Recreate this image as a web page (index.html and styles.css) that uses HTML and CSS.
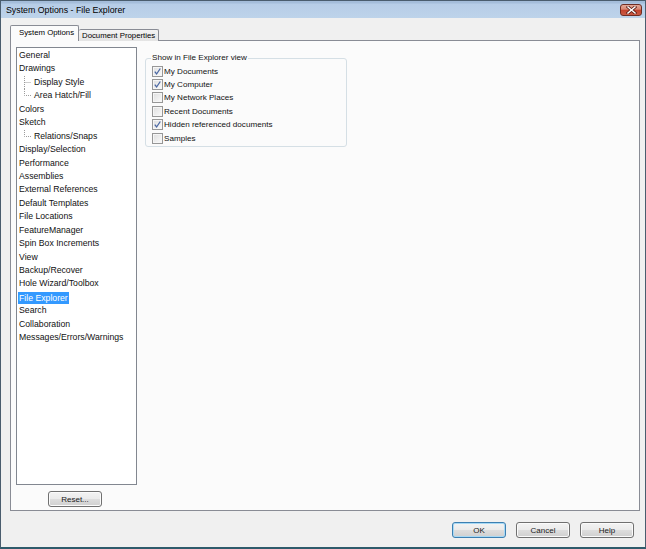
FILE: index.html
```html
<!DOCTYPE html>
<html lang="en">
<head>
<meta charset="utf-8">
<title>System Options - File Explorer</title>
<link rel="stylesheet" href="styles.css">
</head>
<body>
<div class="window">
  <div class="titlebar">
    <span class="title">System Options - File Explorer</span>
    <div class="close">
      <svg width="11" height="8" viewBox="0 0 11 8"><path class="x-shadow" d="M2 1 L9 7 M9 1 L2 7"/><path class="x-fg" d="M2 1 L9 7 M9 1 L2 7"/></svg>
    </div>
  </div>
  <div class="client">
    <div class="tabs">
      <div class="tab active">System Options</div>
      <div class="tab">Document Properties</div>
    </div>
    <div class="panel">
      <div class="leftcol">
        <ul class="tree">
          <li><span>General</span></li>
          <li><span>Drawings</span></li>
          <li class="child"><svg class="conn" width="15" height="13.45" viewBox="0 0 15 13.45"><path d="M5.5 0V13.45M5.5 6.5H12"/></svg><span>Display Style</span></li>
          <li class="child"><svg class="conn" width="15" height="13.45" viewBox="0 0 15 13.45"><path d="M5.5 0V6.5H12"/></svg><span>Area Hatch/Fill</span></li>
          <li><span>Colors</span></li>
          <li><span>Sketch</span></li>
          <li class="child"><svg class="conn" width="15" height="13.45" viewBox="0 0 15 13.45"><path d="M5.5 0V6.5H12"/></svg><span>Relations/Snaps</span></li>
          <li><span>Display/Selection</span></li>
          <li><span>Performance</span></li>
          <li><span>Assemblies</span></li>
          <li><span>External References</span></li>
          <li><span>Default Templates</span></li>
          <li><span>File Locations</span></li>
          <li><span>FeatureManager</span></li>
          <li><span>Spin Box Increments</span></li>
          <li><span>View</span></li>
          <li><span>Backup/Recover</span></li>
          <li><span>Hole Wizard/Toolbox</span></li>
          <li><span class="sel">File Explorer</span></li>
          <li><span>Search</span></li>
          <li><span>Collaboration</span></li>
          <li><span>Messages/Errors/Warnings</span></li>
        </ul>
        <button class="btn reset">Reset...</button>
      </div>
      <div class="group">
        <div class="group-title">Show in File Explorer view</div>
        <div class="row"><span class="cb checked"><svg width="9" height="9" viewBox="0 0 9 9"><path d="M1.8 4.6 L3.6 7 L7.3 1.5"/></svg></span><span>My Documents</span></div>
        <div class="row"><span class="cb checked"><svg width="9" height="9" viewBox="0 0 9 9"><path d="M1.8 4.6 L3.6 7 L7.3 1.5"/></svg></span><span>My Computer</span></div>
        <div class="row"><span class="cb"></span><span>My Network Places</span></div>
        <div class="row"><span class="cb"></span><span>Recent Documents</span></div>
        <div class="row"><span class="cb checked"><svg width="9" height="9" viewBox="0 0 9 9"><path d="M1.8 4.6 L3.6 7 L7.3 1.5"/></svg></span><span>Hidden referenced documents</span></div>
        <div class="row"><span class="cb"></span><span>Samples</span></div>
      </div>
    </div>
    <div class="footer">
      <button class="btn default">OK</button>
      <button class="btn">Cancel</button>
      <button class="btn">Help</button>
    </div>
  </div>
</div>
</body>
</html>
```

FILE: styles.css
```css
html, body {
  margin: 0;
  padding: 0;
  background: #ffffff;
}

body {
  font-family: "Liberation Sans", Arial, sans-serif;
  font-size: 8.7px;
  color: #111111;
}

.window {
  width: 646px;
  height: 549px;
  box-sizing: border-box;
  border: 1px solid #4a5d6e;
  border-bottom: 2px solid #2f5b6b;
  background: #f0f0f0;
  display: flex;
  flex-direction: column;
}

.titlebar {
  flex: none;
  height: 17px;
  background: linear-gradient(#a4bdda 0, #a4bdda 2px, #b6cde7 3px, #bdd3ea 100%);
  display: flex;
  align-items: center;
  padding: 0 3px 0 5px;
}

.title {
  flex: 1;
  font-size: 8.8px;
  color: #000000;
}

.close {
  width: 22px;
  height: 12px;
  box-sizing: border-box;
  border: 1px solid #6e2d23;
  border-radius: 3px;
  background: linear-gradient(#e3a896 0, #d98a76 40%, #c4452f 55%, #c95a44 100%);
  display: flex;
  align-items: center;
  justify-content: center;
}

.close svg path {
  fill: none;
  stroke-linecap: square;
}

.close .x-shadow {
  stroke: #5a1c14;
  stroke-width: 3;
}

.close .x-fg {
  stroke: #ffffff;
  stroke-width: 1.5;
}

.client {
  flex: 1;
  display: flex;
  flex-direction: column;
  padding: 7px 5px 0 9px;
}

.tabs {
  position: relative;
  z-index: 1;
  display: flex;
  align-items: flex-end;
  height: 16px;
  margin-bottom: -1px;
}

.tab {
  box-sizing: border-box;
  height: 12px;
  border: 1px solid #898c95;
  border-bottom: none;
  border-left: none;
  border-radius: 2px 2px 0 0;
  background: linear-gradient(#f4f4f4, #e4e4e4);
  font-size: 7.8px;
  line-height: 11px;
  padding: 0 0 0 3px;
  width: 80px;
  white-space: nowrap;
  color: #000000;
}

.tab.active {
  height: 16px;
  width: 69px;
  border-left: 1px solid #898c95;
  background: #fbfbfb;
  line-height: 14px;
  padding-left: 8px;
}

.panel {
  flex: none;
  height: 471px;
  box-sizing: border-box;
  border: 1px solid #898c95;
  background: #fbfbfb;
  display: flex;
  align-items: flex-start;
  gap: 8px;
  padding: 6px 0 0 5px;
}

.leftcol {
  display: flex;
  flex-direction: column;
}

.tree {
  list-style: none;
  margin: 0;
  padding: 1px 0 0 2px;
  width: 121px;
  height: 438px;
  box-sizing: border-box;
  border: 1px solid #828790;
  background: #ffffff;
}

.tree li {
  display: flex;
  align-items: center;
  height: 13.45px;
  line-height: 13.45px;
  white-space: nowrap;
}

.conn {
  flex: none;
}

.conn path {
  fill: none;
  stroke: #9a9a9a;
  stroke-width: 1;
  stroke-dasharray: 1 1;
}

.sel {
  background: #3399ff;
  color: #ffffff;
  padding: 0 1px;
  margin-left: -1px;
  line-height: 12px;
}

.btn {
  width: 54px;
  height: 16px;
  box-sizing: border-box;
  padding: 0;
  border: 1px solid #707070;
  border-radius: 3px;
  background: linear-gradient(#f3f3f3 0%, #ebebeb 48%, #dddddd 52%, #cfcfcf 100%);
  box-shadow: inset 0 0 0 1px #fbfbfb;
  font-family: "Liberation Sans", Arial, sans-serif;
  font-size: 8px;
  color: #1a1a1a;
}

.btn.reset {
  margin-top: 6px;
  margin-left: 32px;
}

.btn.default {
  border-color: #3c7fb1;
  box-shadow: inset 0 0 0 1px #a7d9f5;
}

.group {
  margin-top: 11px;
  width: 202px;
  box-sizing: border-box;
  border: 1px solid #d5dfe5;
  border-radius: 3px;
  padding: 0 0 1px 6px;
  display: flex;
  flex-direction: column;
  font-size: 8.1px;
}

.group-title {
  align-self: flex-start;
  margin: -8px 0 0 -1px;
  padding: 0 1px;
  background: #fbfbfb;
  line-height: 13.4px;
}

.row {
  display: flex;
  align-items: center;
  height: 13.4px;
  white-space: nowrap;
}

.cb {
  flex: none;
  width: 11px;
  height: 11px;
  box-sizing: border-box;
  border: 1px solid #979797;
  background: linear-gradient(135deg, #dedede 0%, #efefef 60%, #fbfbfb 100%);
  box-shadow: inset 0 0 0 1px #f6f6f6;
  margin-right: 1px;
  display: flex;
  align-items: center;
  justify-content: center;
}

.cb svg path {
  fill: none;
  stroke: #4a67a3;
  stroke-width: 1.3;
}

.footer {
  display: flex;
  justify-content: flex-end;
  gap: 10px;
  margin-top: 11px;
  padding-right: 6px;
}
```
